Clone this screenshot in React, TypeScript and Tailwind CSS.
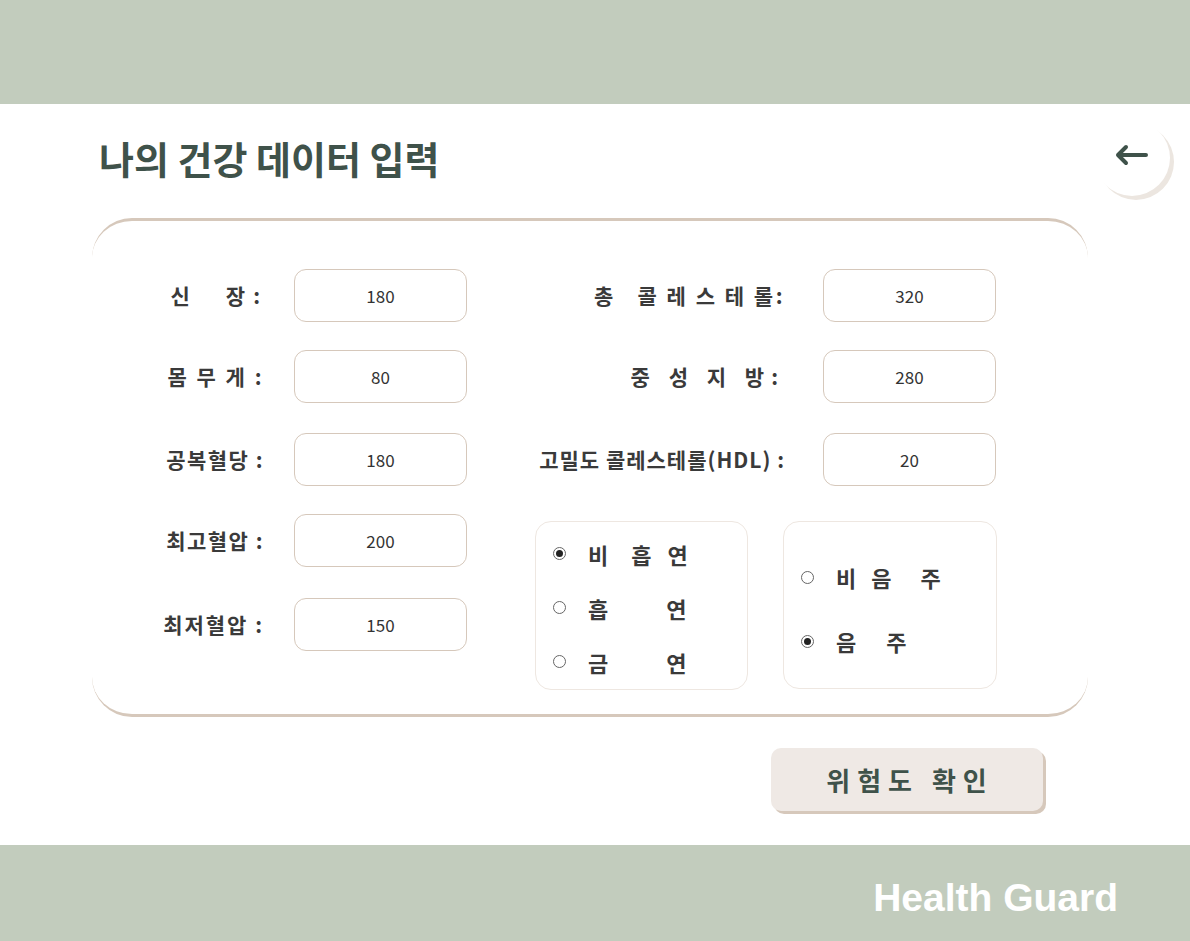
import type { ReactNode } from "react";

const kr = "font-['Noto_Sans_CJK_KR','Noto_Sans',sans-serif]";

function Field({ value, className = "" }: { value: string; className?: string }) {
  return (
    <div
      className={`flex h-[53px] w-[173px] items-center justify-center rounded-[12px] border border-[#d6c8bb] bg-white text-[17px] text-[#333] ${className}`}
    >
      {value}
    </div>
  );
}

function Radio({ checked }: { checked?: boolean }) {
  return (
    <span className="flex h-[13px] w-[13px] items-center justify-center rounded-full border border-[#666] bg-white">
      {checked && <span className="h-[7px] w-[7px] rounded-full bg-[#222]" />}
    </span>
  );
}

function Option({ checked, children }: { checked?: boolean; children: ReactNode }) {
  return (
    <div className="flex items-center">
      <Radio checked={checked} />
      <span className="ml-[22px] flex whitespace-pre text-[22px] font-bold leading-none text-[#3a3a3a]">
        {children}
      </span>
    </div>
  );
}

function BackButton() {
  return (
    <button className="flex h-[76px] w-[76px] items-center justify-center rounded-full bg-white pb-[4px] shadow-[4px_4px_0_#ece6e0]">
      <svg width="36" height="24" viewBox="0 0 36 24" fill="none">
        <path
          d="M32 11H4M12 3L4 11L12 19"
          stroke="#3f524a"
          strokeWidth="4"
          strokeLinecap="round"
          strokeLinejoin="round"
        />
      </svg>
    </button>
  );
}

const labelCls = "whitespace-pre text-right text-[21px] font-bold text-[#3a3a3a]";

export default function App() {
  return (
    <div className={`flex h-[941px] w-[1190px] flex-col bg-white ${kr}`}>
      <header className="h-[104px] bg-[#c2ccbd]" />

      <div className="mt-[16px] flex h-[76px] items-center justify-between pl-[99px] pr-[20px]">
        <h1 className="text-[38px] font-bold leading-none text-[#3f524a]">나의 건강 데이터 입력</h1>
        <BackButton />
      </div>

      <section className="ml-[92px] mt-[22px] flex h-[499px] w-[996px] rounded-[40px] border-y-[3px] border-[#d6c8bb] pt-[48px]">
        {/* left column */}
        <div className="flex w-[443px] flex-col">
          <div className="flex items-center">
            <span className={`w-[168px] ${labelCls}`}>
              신<span className="ml-[36px]">장</span>
              <span className="ml-[8px]">:</span>
            </span>
            <Field value="180" className="ml-[34px]" />
          </div>
          {[
            { label: "몸 무 게 :", value: "80", mt: "mt-[28px]", track: "tracking-[2.5px]" },
            { label: "공복혈당 :", value: "180", mt: "mt-[30px]", track: "tracking-[1.5px]" },
            { label: "최고혈압 :", value: "200", mt: "mt-[28px]", track: "tracking-[1.5px]" },
            { label: "최저혈압 :", value: "150", mt: "mt-[31px]", track: "tracking-[2px]" },
          ].map((row) => (
            <div key={row.label} className={`flex items-center ${row.mt}`}>
              <span className={`w-[172px] ${labelCls} ${row.track}`}>{row.label}</span>
              <Field value={row.value} className="ml-[30px]" />
            </div>
          ))}
        </div>

        {/* right column */}
        <div className="flex flex-col">
          {[
            { label: "총   콜 레 스 테 롤:", value: "320", mt: "", track: "tracking-[2.5px]" },
            { label: "중 성 지 방:", value: "280", mt: "mt-[28px]", track: "tracking-[7px]" },
            { label: "고밀도 콜레스테롤(HDL) :", value: "20", mt: "mt-[30px]", track: "tracking-[1px]" },
          ].map((row) => (
            <div key={row.label} className={`flex items-center ${row.mt}`}>
              <span className={`w-[250px] ${labelCls} ${row.track}`}>{row.label}</span>
              <Field value={row.value} className="ml-[38px]" />
            </div>
          ))}

          <div className="mt-[35px] flex">
            <div className="flex h-[169px] w-[213px] flex-col justify-center gap-[32px] rounded-[16px] border border-[#eee7e1] pl-[17px] pt-[4px]">
              <Option checked>
                <span>비</span>
                <span className="ml-[23px]">흡</span>
                <span className="ml-[16px]">연</span>
              </Option>
              <Option>
                <span>흡</span>
                <span className="ml-[58px]">연</span>
              </Option>
              <Option>
                <span>금</span>
                <span className="ml-[58px]">연</span>
              </Option>
            </div>

            <div className="ml-[35px] flex h-[168px] w-[214px] flex-col justify-center gap-[42px] rounded-[16px] border border-[#eee7e1] pl-[17px] pt-[8px]">
              <Option>
                <span>비</span>
                <span className="ml-[15px]">음</span>
                <span className="ml-[29px]">주</span>
              </Option>
              <Option checked>
                <span>음</span>
                <span className="ml-[30px]">주</span>
              </Option>
            </div>
          </div>
        </div>
      </section>

      <div className="mt-[31px] flex justify-end pr-[147px]">
        <button className="flex h-[63px] w-[272px] items-center justify-center rounded-[10px] bg-[#efe9e5] pl-[6px] text-[26px] font-bold tracking-[7px] text-[#3f524a] shadow-[3px_3px_0_#d6c8bb]">
          위험도 확인
        </button>
      </div>

      <footer className="mt-[34px] flex h-[96px] items-center justify-end bg-[#c2ccbd] pr-[72px] pt-[10px]">
        <span className="font-['Liberation_Sans',Arial,sans-serif] text-[39px] font-bold text-white">
          Health Guard
        </span>
      </footer>
    </div>
  );
}
